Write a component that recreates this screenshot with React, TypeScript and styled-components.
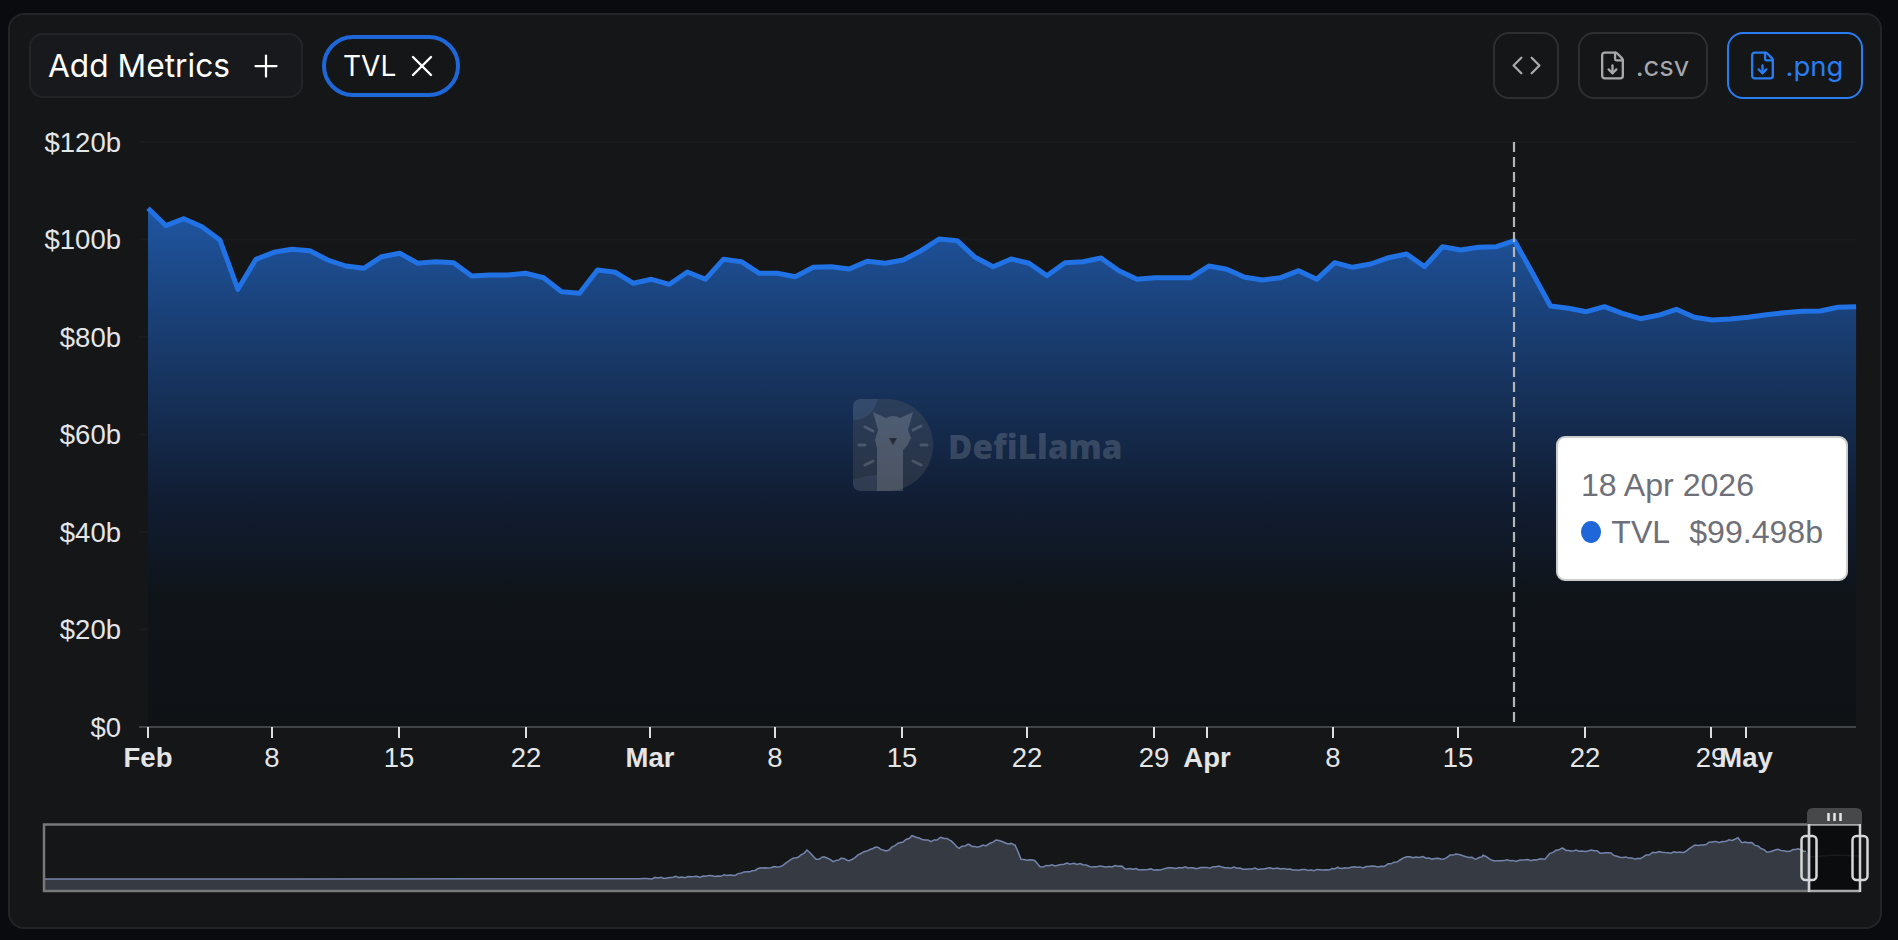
import styled, { createGlobalStyle } from "styled-components";
import { Code, FileDown, Plus, X } from "lucide-react";

const GlobalStyle = createGlobalStyle`
    * {
        box-sizing: border-box;
    }

    body {
        margin: 0;
        background-color: #0a0b0e;
        font-family: "Inter", "Liberation Sans", sans-serif;
    }
`;

const Card = styled.div`
    width: 1874px;
    height: 916px;
    margin: 13px 0 0 8px;
    padding-top: 17px;
    background-color: #141618;
    border: 2px solid #222427;
    border-radius: 16px;
    display: flex;
    flex-direction: column;
`;

const Toolbar = styled.div`
    height: 67px;
    padding: 0 17px 0 19px;
    display: flex;
    align-items: center;
    gap: 19px;
`;

const AddButton = styled.button`
    width: 274px;
    height: 65px;
    padding: 0 17px 0 17px;
    display: flex;
    align-items: center;
    justify-content: space-between;
    background-color: #17191c;
    border: 2px solid #222427;
    border-radius: 14px;
    color: #ffffff;
    font-family: inherit;
    font-size: 31.7px;
`;

const MetricChip = styled.div`
    width: 138px;
    height: 62px;
    padding: 0 16px 0 17px;
    display: flex;
    align-items: center;
    justify-content: space-between;
    border: 4px solid #1f67d8;
    border-radius: 31px;
    color: #ffffff;
    font-size: 28px;
`;

const ToolGroup = styled.div`
    margin-left: auto;
    display: flex;
    align-items: center;
    gap: 19px;
`;

const ToolButton = styled.button<{ $active?: boolean; $width: number }>`
    width: ${props => props.$width}px;
    height: 67px;
    display: flex;
    align-items: center;
    justify-content: center;
    gap: 8px;
    background: none;
    border: 2px solid ${props => (props.$active ? "#2a7df0" : "#2d2f32")};
    border-radius: 16px;
    color: ${props => (props.$active ? "#2a7df0" : "#a8a9ab")};
    font-family: inherit;
    font-size: 27.5px;
`;

const ChartWrap = styled.div`
    position: relative;
    margin-top: 11px;
    height: 670px;
`;

const ChartSvg = styled.svg`
    display: block;
    width: 1870px;
    height: 670px;
`;

const AxisText = styled.text<{ $bold?: boolean }>`
    fill: #e4e5e6;
    font-family: "Liberation Sans", sans-serif;
    font-size: 27.5px;
    font-weight: ${props => (props.$bold ? 700 : 400)};
`;

const WatermarkText = styled.text`
    fill: #ffffff;
    fill-opacity: 0.16;
    font-family: "Open Sans", sans-serif;
    font-size: 33.3px;
    font-weight: 800;
`;

const Tooltip = styled.div`
    position: absolute;
    left: 1546px;
    top: 326px;
    width: 292px;
    height: 145px;
    padding: 0 23px;
    display: flex;
    flex-direction: column;
    justify-content: center;
    background-color: #ffffff;
    border: 2px solid #cccccc;
    border-radius: 9px;
    color: #6e7079;
    font-family: "Liberation Sans", sans-serif;
    font-size: 32.1px;
    line-height: 47px;
`;

const TooltipRow = styled.div`
    display: flex;
    align-items: center;
`;

const SeriesDot = styled.span`
    width: 22px;
    height: 22px;
    margin-right: 10px;
    border-radius: 50%;
    background-color: #1f67d8;
`;

const TooltipValue = styled.span`
    margin-left: 19px;
`;

const SliderSvg = styled.svg`
    display: block;
    width: 1870px;
    height: 100px;
    margin-top: 20px;
`;

// y pixel of each day, Feb 1 onwards
const tvlY = [
    208.3, 225.7, 218.7, 226.7, 240, 289.3, 259.3, 252.3, 249.3, 250.7, 260, 266, 268.3, 256.7, 253.3, 263.3,
    261.7, 262.7, 276, 275, 275, 273.3, 277.7, 291.7, 293.3, 270, 272.3, 283.3, 279.3, 284.3, 272, 279.3,
    259.3, 261.7, 273.3, 273.3, 276.7, 267.3, 266.7, 269, 261.3, 263.3, 260, 250.7, 239, 240.7, 257.3, 266.7,
    259, 263.3, 275.7, 262.7, 261.7, 258, 270.7, 279.3, 277.7, 277.7, 277.7, 266, 269.3, 277.3, 280, 277.7,
    270.7, 279.3, 262.7, 267.3, 264, 257.7, 254, 266.7, 246.7, 250, 247.3, 246.7, 240.7, 273, 306, 308.3,
    311.7, 306.7, 313.3, 318.7, 315.3, 309.3, 317.3, 320, 319, 317.3, 314.7, 312.7, 311.3, 311, 307.3, 306.7,
];

const linePoints = tvlY.map((y, i) => `${148 + i * 17.98},${y}`).join(" ");
const areaPoints = `148,727 ${linePoints} 1856,727`;

const yLabels = ["$120b", "$100b", "$80b", "$60b", "$40b", "$20b", "$0"];

const xTicks = [
    { x: 148, label: "Feb", bold: true },
    { x: 272, label: "8" },
    { x: 399, label: "15" },
    { x: 526, label: "22" },
    { x: 650, label: "Mar", bold: true },
    { x: 775, label: "8" },
    { x: 902, label: "15" },
    { x: 1027, label: "22" },
    { x: 1154, label: "29" },
    { x: 1207, label: "Apr", bold: true },
    { x: 1333, label: "8" },
    { x: 1458, label: "15" },
    { x: 1585, label: "22" },
    { x: 1711, label: "29" },
    { x: 1746, label: "May", bold: true },
];

const overviewKnots = [
    [640, 878.7], [691, 876.7], [732, 875.3], [752, 870.7], [762, 868], [780, 866.7], [790, 860], [798, 857.3],
    [807, 850], [816, 859.3], [824, 856.7], [833, 861.7], [841, 858.3], [849, 860.7], [864, 851.7], [875, 847.3],
    [886, 851], [900, 842.7], [913, 836], [931, 841.7], [941, 837.3], [951, 840.7], [959, 848.3], [969, 844.3],
    [977, 847.3], [987, 845], [996, 840], [1015, 845], [1021, 859.3], [1035, 860.7], [1040, 866.7], [1074, 863.3],
    [1094, 866.7], [1122, 866.3], [1127, 869], [1160, 870], [1170, 867.7], [1193, 867.7], [1198, 868.3],
    [1216, 866.7], [1249, 869], [1278, 868.3], [1293, 870], [1323, 870], [1339, 868], [1385, 866], [1400, 860],
    [1407, 856.7], [1420, 857.3], [1443, 859.3], [1450, 855], [1460, 854.7], [1476, 859.3], [1483, 855.3],
    [1492, 860.3], [1510, 860.7], [1545, 859.3], [1550, 853.3], [1563, 848.3], [1570, 851], [1597, 850.7],
    [1602, 853.3], [1608, 852.7], [1620, 857.3], [1640, 858.7], [1653, 852.3], [1683, 852.7], [1695, 845],
    [1703, 845], [1713, 841.7], [1723, 841.7], [1733, 840], [1738, 837.7], [1742, 842.7], [1752, 842.7],
    [1767, 852.3], [1775, 850], [1790, 851.3], [1798, 848.7], [1806, 851.3],
];

// the real series is daily, so roughen the knots a bit between them
function roughen(knots: number[][]) {
    const points: string[] = [];
    knots.forEach(([x, y], i) => {
        const next = knots[i + 1];
        if (!next) {
            points.push(`${x},${y}`);
            return;
        }
        for (let px = x; px < next[0]; px += 3) {
            const t = (px - x) / (next[0] - x);
            const wiggle = px === x ? 0 : Math.sin(px * 0.9) * 0.5 + Math.sin(px * 0.37) * 0.5;
            points.push(`${px},${(y + (next[1] - y) * t + wiggle).toFixed(1)}`);
        }
    });
    return points.join(" ");
}

const overview = `43,879 300,879 ${roughen(overviewKnots)}`;

function Watermark() {
    return (
        <g>
            <path
                d="M861 399H887A46 46 0 0 1 887 491H861Q853 491 853 483V407Q853 399 861 399Z"
                fill="#ffffff"
                fillOpacity={0.13}
            />
            <path
                d="M853 420Q872 420 878 399H887A46 46 0 0 1 887 491H877V475Q862 476 853 480Z"
                fill="#000000"
                fillOpacity={0.16}
            />
            <path
                d="M873 412L886 418Q893 414 900 418L913 412L908 430L911 438L907 446L903 450V491H877V448L875 440L878 430Z"
                fill="#ffffff"
                fillOpacity={0.17}
            />
            <path d="M889 438H897L893 445Z" fill="#000000" fillOpacity={0.5} />
            <g stroke="#ffffff" strokeOpacity={0.16} strokeWidth={3} strokeLinecap="round">
                <path d="M865 427L873 431M859 445H865M865 465L873 461" />
                <path d="M913 430L921 426M921 445H927M913 461L921 465" />
            </g>
            <WatermarkText x={948} y={459}>
                DefiLlama
            </WatermarkText>
        </g>
    );
}

function TvlChart() {
    return (
        <ChartSvg viewBox="10 110 1870 670">
            <defs>
                <linearGradient id="tvlFill" x1="0" y1="208" x2="0" y2="727" gradientUnits="userSpaceOnUse">
                    <stop offset="0" stopColor="#1f56a2" />
                    <stop offset="0.33" stopColor="#17345f" />
                    <stop offset="0.56" stopColor="#111d33" />
                    <stop offset="0.75" stopColor="#0f1419" />
                    <stop offset="1" stopColor="#0f1215" />
                </linearGradient>
            </defs>

            {yLabels.map((label, i) => (
                <g key={label}>
                    {i < 6 && <line x1={139} x2={1856} y1={142 + i * 97.5} y2={142 + i * 97.5} stroke="#191b1e" strokeWidth={2} />}
                    <AxisText x={121} y={142 + i * 97.5} textAnchor="end" dominantBaseline="central">
                        {label}
                    </AxisText>
                </g>
            ))}

            <polygon points={areaPoints} fill="url(#tvlFill)" />
            <Watermark />
            <polyline points={linePoints} fill="none" stroke="#2172e5" strokeWidth={5} strokeLinejoin="round" />

            <line x1={139} x2={1856} y1={727} y2={727} stroke="#414346" strokeWidth={2} />
            {xTicks.map(tick => (
                <g key={tick.x}>
                    <line x1={tick.x} x2={tick.x} y1={727} y2={738} stroke="#dddddd" strokeWidth={2} />
                    <AxisText x={tick.x} y={767} textAnchor="middle" $bold={tick.bold}>
                        {tick.label}
                    </AxisText>
                </g>
            ))}

            <line x1={1514} x2={1514} y1={142} y2={727} stroke="#b4b5b6" strokeWidth={2.2} strokeDasharray="10 5" />
        </ChartSvg>
    );
}

function SliderHandle({ x }: { x: number }) {
    return <rect x={x - 7.5} y={836} width={15} height={44} rx={4} fill="none" stroke="#d6d6d6" strokeWidth={2.5} />;
}

function RangeSlider() {
    return (
        <SliderSvg viewBox="10 800 1870 100">
            <rect x={1809} y={825} width={51} height={66} fill="#0b0c0e" />
            <polygon points={`${overview} 1809,856 1809,891 43,891`} fill="#363a42" />
            <polyline points={overview} fill="none" stroke="#7484ab" strokeWidth={1.5} />
            <polyline points="1809,857 1835,855 1860,856" fill="none" stroke="#191a1d" strokeWidth={1.5} />
            <rect x={44} y={824.5} width={1765} height={66.5} fill="none" stroke="#77787a" strokeWidth={2.5} />
            <path d="M1809 824.5H1860M1809 891H1860" stroke="#a8a9aa" strokeWidth={2.5} />
            <path d="M1809 824V892M1860 824V892" stroke="#d0d0d0" strokeWidth={2.5} />
            <path d="M1807 824V814Q1807 808 1813 808H1856Q1862 808 1862 814V824Z" fill="#47484a" />
            <path d="M1828.5 813V821M1834.5 813V821M1840.5 813V821" stroke="#e6e6e6" strokeWidth={2.5} />
            <SliderHandle x={1809} />
            <SliderHandle x={1860} />
        </SliderSvg>
    );
}

export default function App() {
    return (
        <>
            <GlobalStyle />
            <Card>
                <Toolbar>
                    <AddButton>
                        Add Metrics
                        <Plus size={36} strokeWidth={1.5} />
                    </AddButton>
                    <MetricChip>
                        TVL
                        <X size={36} strokeWidth={1.6} />
                    </MetricChip>
                    <ToolGroup>
                        <ToolButton $width={66}>
                            <Code size={31} strokeWidth={1.8} />
                        </ToolButton>
                        <ToolButton $width={130}>
                            <FileDown size={31} strokeWidth={1.8} />
                            .csv
                        </ToolButton>
                        <ToolButton $width={136} $active>
                            <FileDown size={31} strokeWidth={1.8} />
                            .png
                        </ToolButton>
                    </ToolGroup>
                </Toolbar>
                <ChartWrap>
                    <TvlChart />
                    <Tooltip>
                        <div>18 Apr 2026</div>
                        <TooltipRow>
                            <SeriesDot />
                            TVL
                            <TooltipValue>$99.498b</TooltipValue>
                        </TooltipRow>
                    </Tooltip>
                </ChartWrap>
                <RangeSlider />
            </Card>
        </>
    );
}
